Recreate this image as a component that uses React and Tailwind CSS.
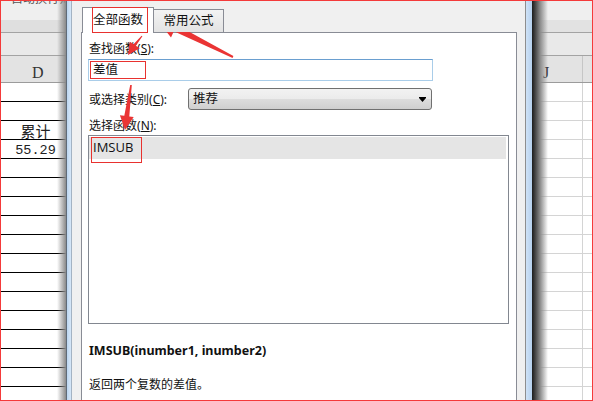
import React from "react";

const rows = Array.from({ length: 17 });
const cjk = "font-['Noto_Sans','Noto_Sans_CJK_SC',sans-serif]";

// left part of the sheet, behind the dialog
function LeftSheet() {
  return (
    <div className="relative w-[65px] shrink-0 flex flex-col bg-white overflow-hidden">
      <div className="h-[19px] shrink-0 bg-[#efefef] overflow-hidden">
        <div className={`-mt-[11px] pl-[10px] text-[12px] text-[#555] whitespace-nowrap ${cjk}`}>自动换行筛选</div>
      </div>
      <div className="h-[13px] shrink-0 bg-[#dfdfdf] border-b border-[#a3a3a3]" />
      <div className="h-[23px] shrink-0 bg-[#e9e9e9] border-b border-[#a3a3a3]" />
      <div className="h-[27px] shrink-0 bg-[#e3e3e3] border-b border-[#9b9b9b] flex items-end pb-[1px] pl-[31px] font-['Liberation_Serif',serif] text-[16px] leading-none text-[#333]">
        D
      </div>
      {rows.map((_, i) => (
        <div key={i} className="h-[19px] shrink-0 border-b border-black flex items-end justify-center pl-[4px] pb-[1px] leading-none text-[#222]">
          {i === 2 && <span className="text-[15px] font-['Noto_Sans_CJK_SC',sans-serif]">累计</span>}
          {i === 3 && <span className="text-[13.5px] font-['Liberation_Mono',monospace]">55.29</span>}
        </div>
      ))}
      <div className="absolute right-0 top-0 bottom-0 w-[9px] bg-gradient-to-r from-transparent to-[#8a8a8a]" />
    </div>
  );
}

// right part of the sheet
function RightSheet() {
  return (
    <div className="relative flex-1 flex flex-col bg-white overflow-hidden">
      <div className="h-[19px] shrink-0 bg-[#efefef]" />
      <div className="h-[13px] shrink-0 bg-[#e2e2e2] border-b border-[#a3a3a3]" />
      <div className="h-[23px] shrink-0 bg-[#e9e9e9] border-b border-[#a3a3a3]" />
      <div className="h-[27px] shrink-0 bg-[#e3e3e3] border-b border-[#9b9b9b] flex">
        <div className="w-[51px] border-r border-[#c6c6c6] flex items-end pl-[11px] pb-[1px] font-['Liberation_Serif',serif] text-[16px] leading-none text-[#333]">
          J
        </div>
      </div>
      {rows.map((_, i) => (
        <div key={i} className="h-[19px] shrink-0 border-b border-[#d4d4d4] flex">
          <div className="w-[51px] border-r border-[#d4d4d4]" />
        </div>
      ))}
      <div className="absolute left-0 top-0 bottom-0 w-[16px] bg-gradient-to-r from-[#1c1c1c] via-[#8a8a8a] to-transparent" />
    </div>
  );
}

function Label({ text, k }) {
  return (
    <div className="leading-[17px] text-[12px] text-[#111]">
      {text}(<span className="underline">{k}</span>):
    </div>
  );
}

function Dialog() {
  return (
    <div className={`w-[454px] shrink-0 bg-[#f0f0f0] border-r border-[#8e8e8e] pl-[9px] pr-[8px] pt-[6px] flex flex-col ${cjk}`}>
      {/* tabs */}
      <div className="relative z-10 flex items-end h-[26px] -mb-px text-[12.5px] text-[#111]">
        <div className="ml-px w-[72px] h-[26px] bg-white border border-b-0 border-[#898c95] relative flex items-center justify-center pb-[1px]">
          全部函数
          <div className="absolute left-[9px] -top-px w-[56px] h-[26px] border border-[#e8322f]" />
        </div>
        <div className="w-[70px] h-[23px] mb-px bg-gradient-to-b from-[#f3f3f3] to-[#e3e3e3] border border-l-0 border-b-0 border-[#898c95] flex items-center justify-center">
          常用公式
        </div>
      </div>

      {/* panel */}
      <div className="flex-1 bg-white border border-b-0 border-[#898c95] pl-[7px] pt-[7px] flex flex-col">
        <Label text="查找函数" k="S" />
        <div className="relative -ml-px mt-[2px] w-[345px] h-[22px] border border-[#a9cde9] border-t-[#6a9fd0] flex items-center pl-[4px] text-[12.5px] text-[#111]">
          差值
          <div className="absolute left-[1px] top-[1px] w-[56px] h-[18px] border border-[#e8322f]" />
        </div>

        <div className="mt-[7px] h-[22px] flex items-center">
          <div className="w-[99px]">
            <Label text="或选择类别" k="C" />
          </div>
          <div className="w-[244px] h-[22px] rounded-[3px] border border-[#707070] bg-[linear-gradient(#f2f2f2,#ebebeb_50%,#dddddd_50%,#cfcfcf)] flex items-center justify-between pl-[4px] pr-[5px] text-[12.5px] text-[#111]">
            推荐
            <svg width="7" height="5" viewBox="0 0 7 5">
              <rect x="0" y="0" width="7" height="1" fill="#000" />
              <polygon points="0,1 7,1 3.5,5" fill="#000" />
            </svg>
          </div>
        </div>

        <div className="mt-[7px]">
          <Label text="选择函数" k="N" />
        </div>
        <div className="-ml-px mt-[1px] w-[421px] h-[189px] border border-[#828790] pt-px">
          <div className="relative w-[417px] h-[22px] bg-[#e5e5e5] flex items-center pl-[4px] font-['Open_Sans',sans-serif] text-[13px] text-[#111]">
            IMSUB
            <div className="absolute left-[2px] top-0 w-[51px] h-[26px] border border-[#e8322f]" />
          </div>
        </div>

        <div className="mt-[18px] leading-[17px] text-[12.5px] font-bold text-[#111] font-['Noto_Sans',sans-serif]">
          IMSUB(inumber1, inumber2)
        </div>
        <div className="mt-[17px] leading-[17px] text-[12px] text-[#111]">返回两个复数的差值。</div>
      </div>
    </div>
  );
}

function Arrows() {
  return (
    <svg className="absolute -left-px -top-px w-[593px] h-[401px] pointer-events-none" viewBox="0 0 593 401">
      <g fill="#ea3434">
        <polygon points="155,17 179.5,19.5 176.8,25 233.4,56.1 232.6,57.9 173.8,31.2 171,37.5" />
        <polygon points="128,55 129.7,41.7 133.5,44.2 141.6,35.7 142.4,36.3 135.9,45.8 139.7,48.3" />
        <polygon points="125,130 119.9,115.2 124.3,115.8 130.2,84.9 131.8,85.1 129.3,116.4 133.7,117" />
      </g>
    </svg>
  );
}

export default function App() {
  return (
    <div className="relative w-[593px] h-[401px] border border-[#f43a3a] overflow-hidden flex bg-white">
      <LeftSheet />
      <div className="w-[6px] shrink-0 border-l border-[#5f6b78] border-r border-r-[#a4b3c3] bg-gradient-to-r from-[#bcd6f0] to-[#d6e7f8]" />
      <Dialog />
      <div className="w-[6px] shrink-0 bg-gradient-to-r from-[#cfe2f6] to-[#b6d1ee]" />
      <RightSheet />
      <Arrows />
    </div>
  );
}
